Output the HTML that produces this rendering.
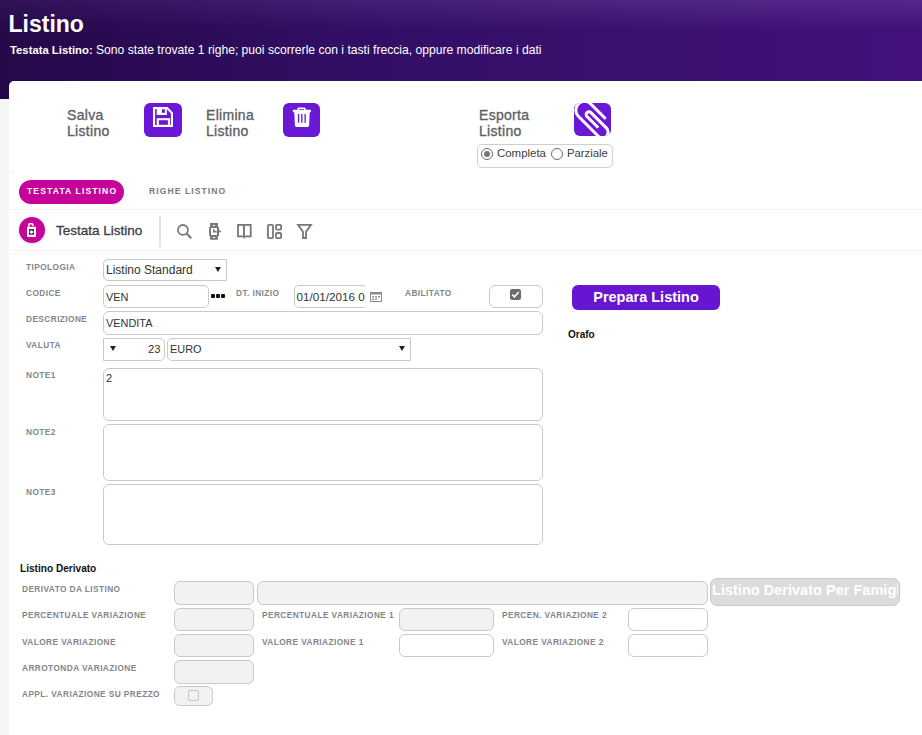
<!DOCTYPE html>
<html><head><meta charset="utf-8">
<style>
*{box-sizing:border-box;margin:0;padding:0}
html,body{width:922px;height:735px;overflow:hidden;background:#f6f6f6;font-family:"Liberation Sans",sans-serif}
.abs{position:absolute}
#hdr{left:0;top:0;width:922px;height:99px;background:linear-gradient(90deg,#250949 0%,#320f66 40%,#42127a 100%)}
#hdrtop{left:0;top:0;width:922px;height:30px;background:linear-gradient(180deg,rgba(120,80,170,.35),rgba(120,80,170,0));-webkit-mask-image:linear-gradient(90deg,rgba(0,0,0,.4),#000 75%)}
#title{left:8.5px;top:9.5px;color:#fff;font-weight:bold;font-size:23px;line-height:28px}
#sub{left:10px;top:42.5px;color:#fff;font-size:12.13px;line-height:14px;white-space:nowrap}
#card{left:9px;top:81px;width:920px;height:660px;background:#fff;border-top-left-radius:5px}
.btxt{color:#5f6166;font-size:14px;line-height:16px;letter-spacing:.3px;-webkit-text-stroke:.35px #5f6166}
.pbtn{background:#6a18d6;border-radius:6px;overflow:hidden}
.lbl{color:#82858c;font-weight:bold;font-size:8.3px;letter-spacing:.42px;white-space:nowrap;line-height:10px}
.inp{border:1px solid #c9c9c9;border-radius:5px;background:#fff}
.gry{background:#f2f2f2}
.txt{color:#333;font-size:12px;white-space:nowrap}
</style></head><body>
<div id="hdr" class="abs"></div>
<div id="hdrtop" class="abs"></div>
<div id="title" class="abs">Listino</div>
<div id="sub" class="abs"><b style="font-size:11.3px">Testata Listino:</b> Sono state trovate 1 righe; puoi scorrerle con i tasti freccia, oppure modificare i dati</div>
<div id="card" class="abs"></div>

<!-- toolbar buttons -->
<div class="abs btxt" style="left:67px;top:106.7px">Salva<br>Listino</div>
<div class="abs pbtn" style="left:144px;top:103px;width:38px;height:34px">
<svg width="38" height="34" viewBox="0 0 38 34" style="position:absolute;left:0;top:0">
<g transform="translate(9,4)">
<path d="M0,0 H14.6 L20,5.8 V20 H0 Z" fill="#fff"/>
<path d="M2.1,2.1 H13.7 L17.9,6.6 V17.9 H2.1 Z" fill="#6a18d6"/>
<rect x="3.7" y="0" width="10.1" height="8" fill="#fff"/>
<rect x="8.9" y="2.3" width="3" height="3.5" fill="#6a18d6"/>
<rect x="3.7" y="11.2" width="13.4" height="8.8" fill="#fff"/>
<rect x="5.9" y="13.2" width="9" height="4.6" fill="#6a18d6"/>
</g></svg></div>

<div class="abs btxt" style="left:206px;top:106.7px">Elimina<br>Listino</div>
<div class="abs pbtn" style="left:283px;top:103px;width:37px;height:34px">
<svg width="37" height="34" viewBox="0 0 37 34" style="position:absolute;left:0;top:0">
<g transform="translate(-283,-103)" fill="#fff">
<path d="M297.4,110.2 V108.6 Q297.4,107.4 298.6,107.4 H304.4 Q305.6,107.4 305.6,108.6 V110.2 H304 V109 H299 V110.2 Z"/>
<rect x="292.8" y="109.8" width="18.2" height="2.4" rx=".6"/>
<path d="M294.3,112 H309.7 L309.1,125.6 Q309,127 307.6,127 H296.4 Q295,127 294.9,125.6 Z"/>
</g>
<g transform="translate(-283,-103)" fill="#6a18d6">
<rect x="297.9" y="114" width="1.3" height="8.8"/>
<rect x="301.2" y="114" width="1.3" height="8.8"/>
<rect x="304.5" y="114" width="1.3" height="8.8"/>
</g></svg></div>

<div class="abs btxt" style="left:479px;top:106.7px">Esporta<br>Listino</div>
<div class="abs pbtn" style="left:574px;top:103px;width:37px;height:33px">
<svg width="37" height="33" viewBox="0 0 37 33" style="position:absolute;left:0;top:0">
<g transform="translate(18,17) rotate(45)">
<path d="M8.58,1.05 L-6.03,1.05 A2.75,2.75 0 0 1 -6.03,-4.45 L16,-4.45 A5.725,5.725 0 0 1 16,7 L-12.34,7 A8.75,8.75 0 0 1 -12.34,-10.5 L7.64,-10.5" fill="none" stroke="#fff" stroke-width="3" stroke-linecap="round"/>
</g></svg></div>

<div class="abs" style="left:477px;top:144px;width:136px;height:23.6px;border:1px solid #cfcfcf;border-radius:5px"></div>
<div class="abs" style="left:481px;top:148px;width:12px;height:12px;border:1px solid #6b6b6b;border-radius:50%;background:#fff"><div class="abs" style="left:2px;top:2px;width:6px;height:6px;border-radius:50%;background:#777"></div></div>
<div class="abs txt" style="left:497px;top:146.5px;font-size:11.45px;color:#404040">Completa</div>
<div class="abs" style="left:551px;top:148px;width:12px;height:12px;border:1px solid #6b6b6b;border-radius:50%;background:#fff"></div>
<div class="abs txt" style="left:567px;top:146.5px;font-size:11.3px;color:#404040">Parziale</div>

<!-- tabs -->
<div class="abs" style="left:9px;top:170px;width:6px;height:4px;background:#fafafa"></div>
<div class="abs" style="left:19px;top:180px;width:105px;height:24px;border-radius:12px;background:#c5039a"></div>
<div class="abs" style="left:27px;top:186px;color:#fff;font-weight:bold;font-size:8.6px;letter-spacing:1.1px;line-height:10px;white-space:nowrap">TESTATA LISTINO</div>
<div class="abs" style="left:149px;top:186px;color:#7b7b7b;font-weight:bold;font-size:8.6px;letter-spacing:1.05px;line-height:10px;white-space:nowrap">RIGHE LISTINO</div>

<!-- toolbar 2 -->
<div class="abs" style="left:10px;top:209px;width:920px;height:1px;background:#f2f2f2"></div>
<div class="abs" style="left:10px;top:212px;width:920px;height:1px;background:#f9f9f9"></div>
<div class="abs" style="left:10px;top:250px;width:920px;height:1px;background:#f2f2f2"></div>
<div class="abs" style="left:10px;top:253px;width:920px;height:1px;background:#f9f9f9"></div>
<div class="abs" style="left:19px;top:217px;width:26px;height:26px;border-radius:50%;background:#c5039a;box-shadow:0 1px 3px rgba(0,0,0,.15)">
<svg width="26" height="26" viewBox="19 217 26 26" style="position:absolute;left:0;top:0">
<rect x="29" y="229.1" width="5" height="5.7" fill="#6e0a5a"/>
<path fill="#fff" fill-rule="evenodd" d="M27,226.8 H36 V237 H27 Z M29,229.1 V234.8 H34 V229.1 Z"/>
<path fill="#fff" d="M28,226.8 V225 Q28,223 30,223 H31.7 Q33.7,223 33.7,225 V225.9 H32.2 V225.2 Q32.2,224.5 31.5,224.5 H30.2 Q29.5,224.5 29.5,225.2 V226.8 Z"/>
<path fill="#fff" d="M31.5,229.9 L33.6,232 L31.5,234.1 L29.4,232 Z"/>
</svg></div>
<div class="abs" style="left:56px;top:223px;color:#3b3e44;font-size:13.5px;line-height:15px;white-space:nowrap;-webkit-text-stroke:.3px #3b3e44">Testata Listino</div>
<div class="abs" style="left:159px;top:216px;width:2px;height:31px;background:#e3e3e3"></div>
<svg class="abs" style="left:170px;top:218px" width="150" height="26" viewBox="170 218 150 26" fill="none" stroke="#777" stroke-width="1.8">
<circle cx="182.95" cy="229.95" r="4.95"/>
<line x1="186.6" y1="233.6" x2="191.2" y2="238.2" stroke-width="2.1"/>
<path fill="#777" stroke="none" fill-rule="evenodd" d="M210.1,223 H217.9 V226.9 H219 V230.5 H220.8 V232.3 H219 V235.9 H217.9 V239.8 H210.1 V235.9 H209.1 V226.9 H210.1 Z M212.8,225 V226.1 H215.2 V225 Z M211,227.9 V235 H217 V227.9 Z M212.8,236.9 V238.1 H215.2 V236.9 Z"/>
<path fill="#777" stroke="none" d="M213,229 H214.4 V231.2 L215.2,230.4 L216.9,231.6 V232.6 H213 Z"/>
<rect x="238" y="224.9" width="12.7" height="11.5"/>
<line x1="243.95" y1="224.9" x2="243.95" y2="236.4" stroke-width="1.9"/>
<line x1="244.3" y1="236" x2="244.3" y2="238.6" stroke-width="1.4"/>
<rect x="267.9" y="224.8" width="5.1" height="13.3" rx="1.1"/>
<rect x="276" y="224.8" width="5.1" height="4.9" rx="1.1"/>
<rect x="276" y="233" width="5.1" height="5.1" rx="1.1"/>
<path d="M298,224.8 H311 L306,231.8 V238 H303 V231.8 Z" stroke-linejoin="miter"/>
</svg>

<!-- form -->
<div class="abs lbl" style="left:26px;top:262px">TIPOLOGIA</div>
<div class="abs inp" style="left:103px;top:259px;width:124px;height:22px;border-radius:5px 0 0 5px"></div>
<div class="abs txt" style="left:106px;top:263px">Listino Standard</div>
<div class="abs" style="left:214.6px;top:266.9px;width:0;height:0;border-left:3.2px solid transparent;border-right:3.2px solid transparent;border-top:5px solid #222"></div>

<div class="abs lbl" style="left:26px;top:288px">CODICE</div>
<div class="abs inp" style="left:103px;top:285px;width:106px;height:23px"></div>
<div class="abs txt" style="left:106px;top:291px;font-size:10.9px">VEN</div>
<div class="abs" style="left:211px;top:294px;width:4px;height:4px;background:#111;border-radius:1px"></div>
<div class="abs" style="left:216px;top:294px;width:4px;height:4px;background:#111;border-radius:1px"></div>
<div class="abs" style="left:221px;top:294px;width:4px;height:4px;background:#111;border-radius:1px"></div>
<div class="abs lbl" style="left:236px;top:288px">DT. INIZIO</div>
<div class="abs inp" style="left:294px;top:285px;width:73px;height:23px;border-radius:5px;border-right-color:transparent;overflow:hidden"><div class="abs txt" style="left:1.6px;top:3.5px;font-size:11.7px">01/01/2016 0</div></div>
<svg class="abs" style="left:370px;top:292px" width="12" height="10" viewBox="0 0 12 10">
<rect x=".5" y=".5" width="11" height="9" fill="#fff" stroke="#8a8a8a"/>
<rect x="0" y="0" width="12" height="2.5" fill="#8a8a8a"/>
<g fill="#9a9a9a"><rect x="2" y="4" width="2" height="1.5"/><rect x="5" y="4" width="2" height="1.5"/><rect x="8" y="4" width="2" height="1.5"/><rect x="2" y="6.5" width="2" height="1.5"/><rect x="5" y="6.5" width="2" height="1.5"/></g>
</svg>
<div class="abs lbl" style="left:405px;top:288px">ABILITATO</div>
<div class="abs inp" style="left:489px;top:285px;width:54px;height:23px;border-radius:6px"></div>
<div class="abs" style="left:510px;top:289px;width:11px;height:11px;background:#6b6b6b;border-radius:2px">
<svg width="11" height="11" viewBox="0 0 11 11" style="position:absolute;left:0;top:0"><path d="M2.2,5.6 L4.4,7.8 L8.8,3" fill="none" stroke="#fff" stroke-width="1.6"/></svg></div>

<div class="abs lbl" style="left:26px;top:314px">DESCRIZIONE</div>
<div class="abs inp" style="left:103px;top:311px;width:440px;height:24px;border-radius:6px"></div>
<div class="abs txt" style="left:106px;top:317px;font-size:10.9px">VENDITA</div>

<div class="abs lbl" style="left:26px;top:340px">VALUTA</div>
<div class="abs inp" style="left:103px;top:338px;width:62px;height:23px;border-radius:0 5px 5px 0"></div>
<div class="abs" style="left:109.6px;top:346.3px;width:0;height:0;border-left:3.2px solid transparent;border-right:3.2px solid transparent;border-top:5px solid #222"></div>
<div class="abs txt" style="left:148px;top:343px;font-size:11.2px">23</div>
<div class="abs inp" style="left:167px;top:338px;width:244px;height:23px;border-radius:5px 0 0 5px"></div>
<div class="abs txt" style="left:170px;top:343px;font-size:10.9px">EURO</div>
<div class="abs" style="left:398.8px;top:346.3px;width:0;height:0;border-left:3.2px solid transparent;border-right:3.2px solid transparent;border-top:5px solid #222"></div>

<div class="abs lbl" style="left:26px;top:370px">NOTE1</div>
<div class="abs inp" style="left:103px;top:368px;width:440px;height:53px;border-radius:6px"></div>
<div class="abs txt" style="left:106px;top:372px;font-size:11px">2</div>
<div class="abs lbl" style="left:26px;top:427px">NOTE2</div>
<div class="abs inp" style="left:103px;top:424px;width:440px;height:57px;border-radius:6px"></div>
<div class="abs lbl" style="left:26px;top:487px">NOTE3</div>
<div class="abs inp" style="left:103px;top:484px;width:440px;height:61px;border-radius:6px"></div>

<div class="abs" style="left:572px;top:285px;width:148px;height:25px;border-radius:6px;background:#6616d1"></div>
<div class="abs" style="left:572px;top:289px;width:148px;text-align:center;color:#fff;font-weight:bold;font-size:14.5px;line-height:16px;margin-top:-0.4px">Prepara Listino</div>
<div class="abs" style="left:568px;top:328.5px;color:#111;font-weight:bold;font-size:10px;line-height:12px">Orafo</div>

<!-- derivato -->
<div class="abs" style="left:20px;top:562.7px;color:#111;font-weight:bold;font-size:10.1px;line-height:12px">Listino Derivato</div>
<div class="abs lbl" style="left:22px;top:584px">DERIVATO DA LISTINO</div>
<div class="abs inp gry" style="left:174px;top:581px;width:80px;height:24px;border-radius:6px"></div>
<div class="abs inp gry" style="left:257px;top:581px;width:451px;height:24px;border-radius:6px"></div>
<div class="abs" style="left:710px;top:578px;width:190px;height:28px;border-radius:7px;background:#dcdcdc;border:1px solid #cbcbcb;overflow:hidden"><div class="abs" style="left:1px;top:3px;width:186px;height:20px;overflow:hidden;color:#fff;font-weight:bold;font-size:14.55px;line-height:16px;white-space:nowrap">Listino Derivato Per Famiglia</div></div>

<div class="abs lbl" style="left:22px;top:610px">PERCENTUALE VARIAZIONE</div>
<div class="abs inp gry" style="left:174px;top:608px;width:80px;height:23px;border-radius:6px"></div>
<div class="abs lbl" style="left:262px;top:610px">PERCENTUALE VARIAZIONE 1</div>
<div class="abs inp gry" style="left:399px;top:608px;width:95px;height:23px;border-radius:6px"></div>
<div class="abs lbl" style="left:502px;top:610px">PERCEN. VARIAZIONE 2</div>
<div class="abs inp" style="left:628px;top:608px;width:80px;height:23px;border-radius:6px"></div>

<div class="abs lbl" style="left:22px;top:637px">VALORE VARIAZIONE</div>
<div class="abs inp gry" style="left:174px;top:634px;width:80px;height:23px;border-radius:6px"></div>
<div class="abs lbl" style="left:262px;top:637px">VALORE VARIAZIONE 1</div>
<div class="abs inp" style="left:399px;top:634px;width:95px;height:23px;border-radius:6px"></div>
<div class="abs lbl" style="left:502px;top:637px">VALORE VARIAZIONE 2</div>
<div class="abs inp" style="left:628px;top:634px;width:80px;height:23px;border-radius:6px"></div>

<div class="abs lbl" style="left:22px;top:663px">ARROTONDA VARIAZIONE</div>
<div class="abs inp gry" style="left:174px;top:660px;width:80px;height:24px;border-radius:6px"></div>
<div class="abs lbl" style="left:22px;top:689px">APPL. VARIAZIONE SU PREZZO</div>
<div class="abs inp gry" style="left:174px;top:686px;width:39px;height:20px;border-radius:6px"></div>
<div class="abs" style="left:188px;top:690px;width:11px;height:11px;border:1px solid #c4c4c4;border-radius:2px;background:#f2f2f2"></div>
</body></html>
